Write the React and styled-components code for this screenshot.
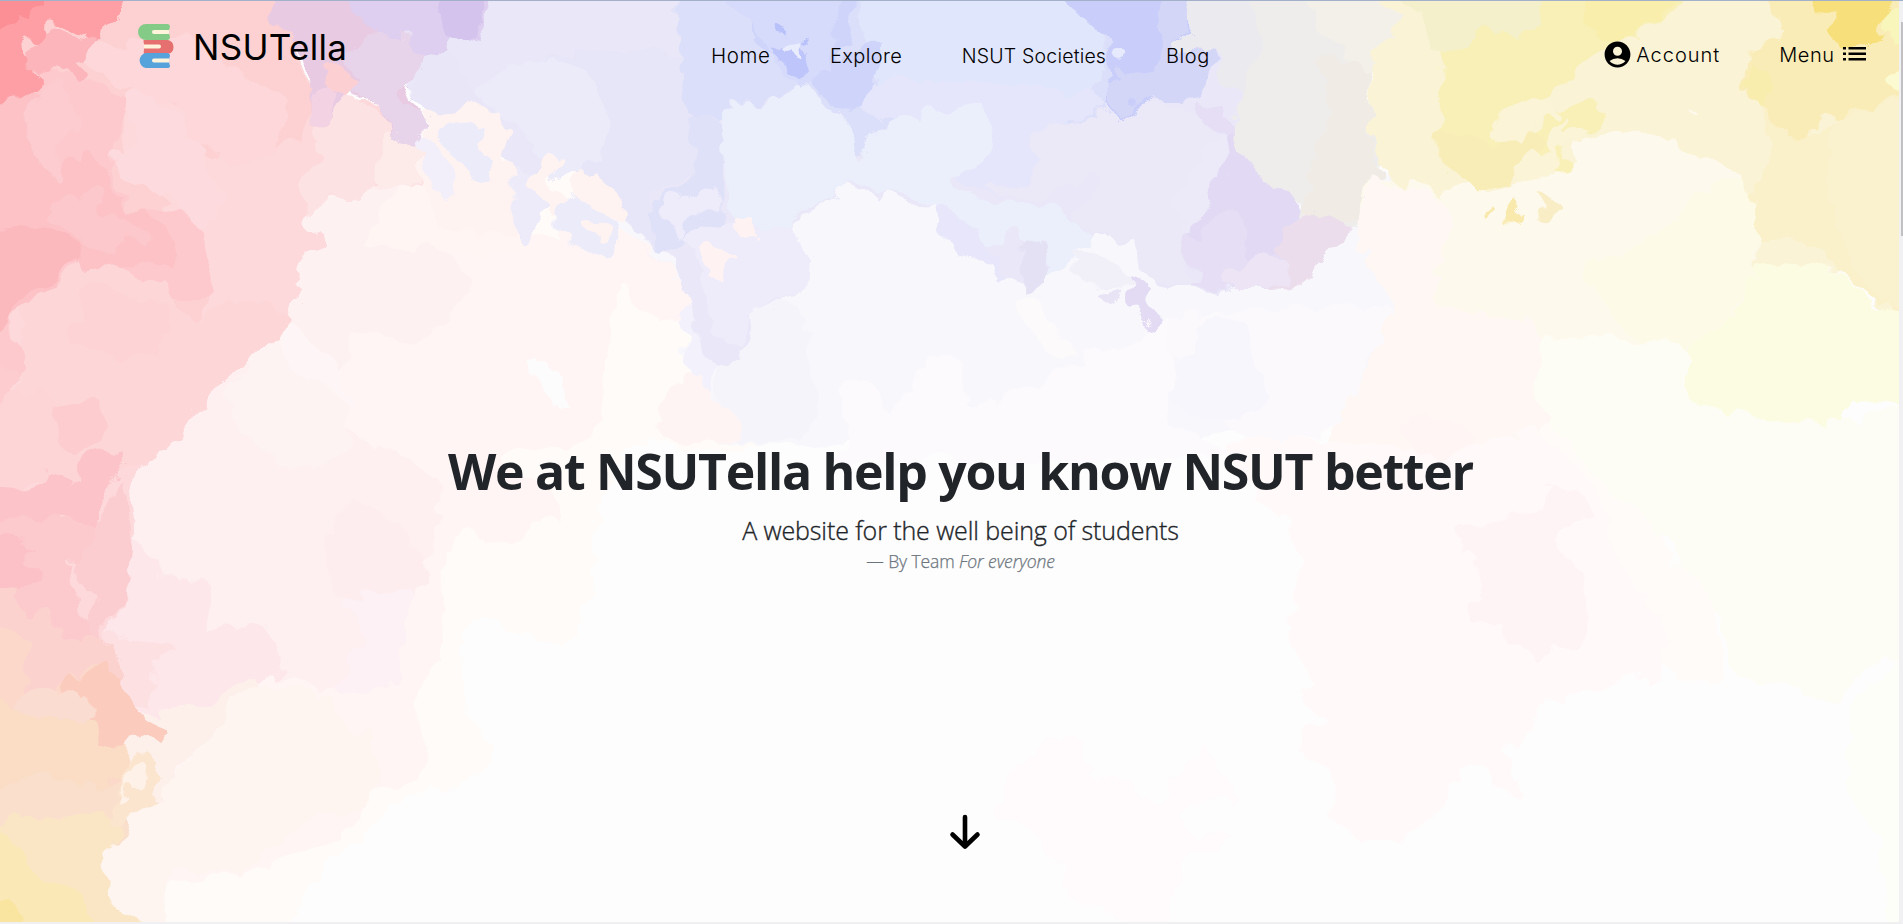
import React from "react";
import styled, { createGlobalStyle } from "styled-components";
import { MdAccountCircle } from "react-icons/md";

const GlobalStyle = createGlobalStyle`
  *, *::before, *::after { box-sizing: border-box; }
  html, body { margin: 0; height: 100%; overflow: hidden; }
`;

const Page = styled.div`
  position: relative;
  isolation: isolate;
  width: 1903px;
  height: 924px;
  overflow: hidden;
  display: flex;
  flex-direction: column;
  border-top: 1px solid #a3b0ca;
  border-bottom: 2px solid #f0eff1;
  font-family: "Open Sans", "Noto Sans", sans-serif;
  color: #212529;
`;

const Wash = styled.svg`
  position: absolute;
  left: 0;
  top: -1px;
  z-index: -1;
`;

const ScrollTrack = styled.div`
  position: absolute;
  right: 0;
  top: 0;
  width: 4px;
  height: 100%;
  padding-top: 21px;
  background: #f1f1f3;
`;

const ScrollThumb = styled.div`
  width: 2px;
  height: 214px;
  margin-left: 2px;
  background: #c1c1c4;
`;

const Header = styled.header`
  display: grid;
  grid-template-columns: 711px 1fr auto;
  align-items: start;
  height: 110px;
  padding-right: 36px;
  font-family: Inter, "Liberation Sans", sans-serif;
  color: #000;
`;

const Brand = styled.a`
  display: flex;
  align-items: flex-start;
  padding: 22px 0 0 137px;
`;

const BrandName = styled.span`
  margin: 1px 0 0 16px;
  font-size: 35px;
  line-height: 46px;
  letter-spacing: ${(p) => p.$track}px;
  white-space: nowrap;
`;

const Nav = styled.nav`
  display: flex;
  gap: 60px;
  padding-top: 40px;
`;

const NavLink = styled.a`
  margin-right: ${(p) => -(p.$track || 0)}px;
  font-size: ${(p) => p.$size || 19.5}px;
  font-weight: 300;
  line-height: 30px;
  letter-spacing: ${(p) => p.$track || 0}px;
  white-space: nowrap;
`;

const Actions = styled.div`
  display: flex;
  gap: 60px;
  padding-top: 38px;
`;

const Action = styled.a`
  display: flex;
  align-items: center;
  height: 30px;
  gap: ${(p) => p.$gap}px;

  ${NavLink} {
    padding-top: 2px;
  }
`;

const Hero = styled.main`
  width: 1921px;
  flex: 1;
  display: flex;
  flex-direction: column;
  align-items: center;
  padding-top: 325px;
`;

const Title = styled.h1`
  margin: 0;
  font-size: 50px;
  line-height: 70px;
  font-weight: 700;
  letter-spacing: ${(p) => p.$track}px;
  white-space: nowrap;
`;

const Subtitle = styled.p`
  margin: 5px 0 0;
  font-size: 25px;
  line-height: 38px;
  font-weight: 300;
  -webkit-text-stroke: 0.35px currentColor;
  letter-spacing: ${(p) => p.$track}px;
  white-space: nowrap;
`;

const Byline = styled.footer`
  margin-top: -1px;
  font-size: 17.5px;
  font-weight: 300;
  -webkit-text-stroke: 0.25px currentColor;
  line-height: 26px;
  color: #6c757d;
  letter-spacing: ${(p) => p.$track}px;
  white-space: nowrap;
`;

const DownLink = styled.a`
  margin: 240px 0 0 9px;
  height: 40px;
`;

/* Closed Catmull-Rom curve through a flat "x,y x,y" list. */
function curve(pts) {
  const p = pts.trim().split(/\s+/).map((s) => s.split(",").map(Number));
  const n = p.length;
  let d = `M${p[0][0]},${p[0][1]}`;
  for (let i = 0; i < n; i++) {
    const a = p[(i - 1 + n) % n];
    const b = p[i];
    const c = p[(i + 1) % n];
    const e = p[(i + 2) % n];
    const k = 7;
    d += `C${(b[0] + (c[0] - a[0]) / k).toFixed(1)},${(b[1] + (c[1] - a[1]) / k).toFixed(1)} ${(c[0] - (e[0] - b[0]) / k).toFixed(1)},${(c[1] - (e[1] - b[1]) / k).toFixed(1)} ${c[0]},${c[1]}`;
  }
  return d + "Z";
}

const washes = [
  // warm cream and rose haze below the left side
  ["#fefbf9", "270,170 700,170 760,440 640,445 600,520 580,640 480,625 465,700 495,770 400,800 370,830 320,875 250,940 -40,940 -40,300"],
  ["#fff5f4", "270,170 400,170 520,235 570,230 620,225 650,240 690,290 695,310 660,318 620,290 610,330 590,440 500,455 560,505 520,540 450,545 440,650 420,700 425,770 370,800 320,850 130,880 90,720 110,440"],
  ["#feeff0", "120,430 250,330 300,260 330,275 280,330 330,370 350,430 440,480 435,530 420,590 400,640 380,680 330,690 270,680 240,700 190,712 145,720 100,640 110,540"],
  ["#fef1f1", "300,200 395,180 370,250 440,250 470,290 420,340 360,335 335,390 270,350 285,290"],
  ["#fff5f3", "400,185 430,178 520,235 500,258 450,250 370,250 380,215"],
  ["#fef3f3", "260,330 330,370 350,440 300,470 250,440 230,400 250,370"],
  ["#fef6f6", "280,325 310,335 345,380 350,410 320,380 290,372 283,350"],
  ["#feedee", "325,560 350,500 395,520 430,580 400,600 340,600"],
  ["#fde7ea", "135,540 170,575 205,582 215,600 207,630 260,630 285,670 245,690 215,705 180,712 145,718 105,655 110,620"],
  ["#fde0e2", "108,635 150,640 175,650 155,670 155,700 140,712 120,690 100,660"],
  ["#fdf1f5", "375,595 420,590 405,640 395,683 340,690 365,640 340,605"],
  ["#fdf0eb", "145,718 185,712 220,700 245,680 260,700 240,730 200,745 175,765 170,790 150,830 120,840 100,820 110,750"],
  ["#fef5f0", "260,690 330,700 350,730 380,740 370,800 300,830 240,870 170,880 160,940 100,930 90,840 150,810 175,770 210,735"],
  ["#fdfcfd", "525,360 555,370 567,400 562,410 545,395 532,375"],

  // pink bank down the left edge
  ["#fdd9db", "-40,-40 290,-40 300,50 325,120 350,105 385,105 420,145 425,182 355,186 350,198 330,193 310,217 325,241 308,255 298,286 306,292 284,326 258,357 225,385 207,407 175,440 145,462 130,500 139,550 129,575 128,600 119,622 105,645 108,668 130,700 146,722 150,740 40,760 -40,740"],
  ["#fde2e4", "322,95 365,103 395,120 420,145 425,182 380,184 350,198 330,192 312,216 305,180 322,155"],
  ["#fdebea", "392,130 425,148 425,180 380,184 380,155"],
  ["#fdd0d2", "-40,-40 285,-40 300,60 310,100 300,140 280,145 240,165 230,146 205,155 180,110 140,95 120,140 165,200 185,260 210,300 180,330 150,340 120,270 80,265 30,300 -40,320"],
  ["#fdd6d8", "30,290 80,262 165,270 190,320 240,300 290,320 255,360 205,407 175,440 145,462 40,470 20,380"],
  ["#fdc9cc", "-40,80 60,70 115,100 140,100 120,120 115,170 135,210 190,210 205,240 215,290 180,300 165,280 145,280 125,270 80,262 55,293 15,305 10,330 25,370 -40,400"],
  ["#fcc2c5", "-40,100 25,90 55,115 60,150 50,180 90,150 110,175 125,205 170,225 180,270 150,262 90,271 70,262 55,292 10,312 -40,320"],
  ["#fcb9bd", "-40,240 40,230 75,240 78,258 66,270 55,288 15,302 2,330 -40,340"],
  ["#fcc8cb", "50,215 75,195 100,190 105,215 130,215 150,235 145,250 125,235 110,255 75,235"],
  ["#fcccd0", "25,110 40,95 55,75 70,90 80,125 70,135 62,180 40,165 28,140"],
  ["#fddadd", "125,100 155,93 175,115 200,140 205,175 225,190 225,200 200,230 170,195 140,190 115,160 115,150 135,145"],
  ["#fdd3d5", "85,290 115,293 140,300 175,310 160,350 120,360 80,345 65,330 85,315"],
  ["#fdd7d9", "80,45 115,50 150,35 210,45 255,85 285,100 275,150 235,165 190,130 175,105 115,90 95,65"],
  ["#fd9fa4", "-40,-40 115,-40 116,15 105,28 98,47 75,30 55,25 45,42 20,40 22,62 42,78 38,90 10,98 -40,110"],
  ["#fc8f96", "-40,-40 40,-40 38,18 25,12 12,25 -40,20"],
  ["#fcb6bb", "45,38 60,28 82,38 98,47 92,58 80,62 90,75 75,78 60,65 30,72 22,55"],
  ["#fcb0b4", "-40,360 0,400 -5,420 -40,430"],
  ["#fdcccf", "-40,370 15,370 22,410 100,400 105,440 70,460 30,430 -40,440"],
  ["#fdd5d7", "20,395 55,400 58,440 95,470 80,500 30,480 0,520 -40,500 -40,420"],
  ["#fcc4c9", "-40,490 25,488 55,475 70,485 60,505 82,470 100,455 122,455 105,500 102,530 70,520 50,530 -40,530"],
  ["#fcc9cc", "-40,525 100,525 90,555 72,570 80,605 95,620 104,635 75,640 30,625 -40,590"],
  ["#fcc1c6", "-40,540 25,545 30,560 45,577 30,590 -40,600"],
  ["#fccdd0", "100,530 122,480 128,520 139,550 129,575 127,600 115,620 100,640 93,600 75,575 80,555"],
  ["#fcd2cf", "-40,580 10,590 30,615 50,605 65,635 105,640 115,680 -40,720"],
  ["#fbd8ca", "-40,635 30,640 30,675 25,700 60,690 90,665 115,690 140,720 146,728 165,732 155,740 130,745 125,770 118,790 85,790 -40,800"],
  ["#fbccbe", "72,680 108,668 130,700 146,722 150,727 167,733 153,742 125,747 85,745 88,725 90,705 70,692"],
  ["#fbdcd0", "15,710 35,690 85,695 92,720 60,726 40,718"],
  ["#fbdcc4", "-40,700 20,712 90,725 100,745 130,748 118,782 60,795 -40,800"],
  ["#fae0cc", "-40,780 20,790 50,775 80,790 125,790 120,840 -40,850"],
  ["#fae6c5", "-40,840 25,820 95,818 122,822 120,835 102,850 98,868 110,885 112,905 142,925 145,940 -40,940"],
  ["#fae8b6", "-40,815 15,840 40,880 80,895 90,940 -40,940"],
  ["#f9e4a0", "-40,895 10,905 22,940 -40,940"],
  ["#fce5cf", "130,763 150,760 158,775 150,795 158,802 138,820 118,822 118,785"],
  ["#fef1e8", "132,770 143,770 145,785 125,788 120,795 132,800 125,805 118,797 122,780"],

  // pale lilac centre
  ["#f8f7fc", "650,190 1420,180 1450,500 1330,420 1190,435 1040,430 850,443 700,440 705,390 680,355 695,335 680,318 692,295 655,250"],
  ["#fcfafd", "850,445 840,390 870,380 885,410 900,405 935,355 965,365 970,405 1020,390 1075,375 1090,345 1140,340 1170,320 1180,365 1170,420 1210,455 850,465"],
  ["#fbf9fc", "1170,325 1250,310 1370,310 1395,330 1370,360 1340,420 1270,450 1210,400"],
  ["#f6f6fc", "1205,320 1245,325 1265,395 1255,412 1210,420 1170,395 1190,355"],
  ["#fdfafb", "1020,300 1045,303 1070,335 1070,365 1045,345 1025,330"],
  ["#f3f1fc", "625,225 690,290 705,320 760,270 755,350 715,372 708,393 682,358 695,335 675,318 692,295 655,255"],
  ["#f6f4fb", "755,310 790,300 810,340 815,420 790,438 740,440 715,400 720,365 745,345"],
  ["#fef4f3", "690,375 715,400 740,420 740,440 665,440 660,405"],

  // lavender canopy
  ["#e9e7f8", "410,-40 1260,-40 1240,110 1240,150 1300,200 1345,220 1352,232 1320,258 1295,284 1240,288 1215,293 1190,292 1160,290 1145,260 1110,240 1070,265 1042,275 1032,290 1005,282 972,262 945,235 938,210 912,206 895,195 875,196 850,186 820,205 792,230 803,255 800,267 813,270 800,290 775,303 752,313 752,340 730,362 712,365 695,320 665,250 640,222 622,214 600,190 575,180 560,165 545,195 548,215 535,240 518,238 515,210 520,180 500,155 470,110 435,115"],
  ["#e7e5f8", "540,60 690,60 700,150 690,180 650,195 662,250 625,218 600,190 575,180 550,150 530,100"],
  ["#dfe1f8", "690,120 720,125 722,210 730,235 700,240 662,250 650,215 670,190 695,180"],
  ["#ecebfa", "480,90 545,60 600,90 610,140 570,180 545,160 520,130"],
  ["#eeebfa", "660,220 670,195 695,195 715,190 720,210 700,215 680,240 705,225 740,225 780,220 812,270 800,290 755,312 740,350 710,320 705,290 690,250"],
  ["#dcdff9", "690,-40 830,-40 1000,-40 1120,-40 1115,60 1110,115 1060,140 1000,110 940,115 880,145 855,155 835,120 800,90 770,105 700,115 680,60"],
  ["#e0e6fb", "860,-40 1060,-40 1100,30 1105,70 1090,100 1050,140 1020,190 990,180 980,130 930,110 880,90 870,40"],
  ["#e5e6fb", "840,90 950,80 1060,90 1110,110 1050,130 1030,190 980,190 900,130"],
  ["#ebeefb", "720,115 740,105 775,105 795,82 815,90 835,110 855,130 862,160 875,140 895,122 925,115 975,110 995,145 980,165 950,180 990,200 1030,205 1070,215 1090,240 1070,265 1040,275 1020,235 990,255 1003,280 972,262 945,240 938,210 895,195 850,186 800,215 790,230 735,218 725,185 722,140"],
  ["#e7e6fa", "940,212 965,220 985,245 1003,280 972,262 950,245"],
  ["#e5e1f5", "1025,245 1048,240 1050,270 1032,290 1020,280"],
  ["#ebe8f8", "1040,135 1110,115 1170,105 1215,125 1230,150 1225,185 1190,220 1185,250 1195,290 1160,285 1140,265 1110,240 1090,235 1080,210 1100,180 1070,185 1035,200 990,190 1035,180"],
  ["#ced4fa", "770,-40 845,-40 855,25 840,60 880,40 860,110 830,100 800,70 770,55 750,30"],
  ["#d6dbfb", "700,-40 830,-40 830,60 815,85 780,70 750,25"],
  ["#bdc5fa", "768,47 795,48 805,62 806,78 785,68"],
  ["#b9c1fa", "780,24 790,28 790,34 780,32"],
  ["#b9c1fa", "803,39 808,41 805,47 800,45"],
  ["#e9ecfc", "785,48 800,43 797,63"],
  ["#c8cdf9", "1020,-40 1210,-40 1195,20 1180,50 1200,60 1190,90 1160,100 1118,118 1112,80 1108,60 1111,38 1097,30 1080,15"],
  ["#d4d6f8", "1160,-40 1210,-40 1195,15 1178,45 1200,38 1216,48 1212,68 1192,98 1150,102 1120,115 1115,75 1160,65"],
  ["#e7e9fc", "1116,51 1124,57 1120,66 1115,59"],
  ["#e6def4", "1195,100 1235,125 1240,150 1300,200 1345,220 1352,232 1320,258 1295,284 1240,288 1190,290 1200,275 1180,240 1205,215 1225,180 1230,140 1200,120"],
  ["#e2daf4", "1235,135 1310,205 1310,218 1275,255 1250,260 1235,210 1195,240 1190,215 1215,190"],
  ["#ecdded", "1275,245 1305,223 1325,218 1350,235 1320,258 1305,282 1275,287 1285,265"],
  ["#ede5f5", "1230,275 1265,257 1285,263 1285,283 1235,288"],
  ["#ece9f9", "1205,145 1228,138 1225,180 1190,230 1175,200 1195,175"],
  ["#f8f7fc", "1070,265 1090,242 1100,239 1125,248 1138,243 1148,258 1150,275 1135,283 1160,295 1160,320 1130,345 1065,345 1040,300 1045,277"],
  ["#f1eff8", "1075,258 1095,255 1133,277 1130,285 1095,285 1078,275"],
  ["#e2dbf3", "1135,278 1150,287 1153,300 1160,322 1152,332 1146,310 1133,305"],
  ["#e8e3f5", "1103,294 1126,288 1115,301 1105,302"],

  // violet fringe
  ["#e8cbe3", "270,-40 380,-40 400,30 405,80 425,110 420,147 395,130 380,103 355,97 340,75 345,95 325,125 307,110 308,65 285,30"],
  ["#e8d4ea", "355,50 380,30 420,50 418,75 400,90 425,115 420,147 400,135 380,103 350,92 355,75 345,60"],
  ["#decff0", "330,-40 485,-40 484,20 470,42 455,42 440,60 420,55 405,38 370,30 350,0"],
  ["#d4c4ed", "435,-40 482,-40 483,10 470,40 455,42 440,15"],
  ["#fccfd2", "325,70 340,65 355,82 345,98 328,88"],
  ["#f3d3e3", "315,95 332,90 335,110 323,126 308,113"],
  ["#e9e6f7", "418,65 430,57 455,65 475,90 490,110 460,115 435,112 422,95"],
  // cream flecks between lavender and rose
  ["#fff3f1", "428,115 448,112 470,108 500,113 505,130 512,140 500,158 515,170 520,195 510,235 440,225 425,182 416,165 425,150"],
  ["#ecebfa", "440,128 460,120 485,130 475,145 490,160 500,177 485,180 465,162 448,150"],
  ["#f2effa", "420,140 435,140 445,160 457,175 455,195 443,196 430,180"],
  ["#edebfa", "515,165 530,175 540,165 548,195 545,225 535,240 520,240 514,215"],
  ["#fff3f1", "540,160 550,155 565,162 552,180 565,200 568,215 555,220 540,200 528,190"],
  ["#ecebfa", "558,205 580,200 610,215 620,228 617,255 600,252 575,250 565,235"],
  ["#fff3f1", "575,178 592,175 600,188 620,205 625,220 605,213 578,203"],
  ["#fff3f1", "581,222 610,223 610,244 597,240 598,232 585,235"],
  ["#fef3f2", "733,218 745,219 758,216 755,235 748,245 738,237"],
  ["#fef3f2", "705,250 716,252 722,248 735,258 722,278 702,266"],

  // grey-beige column
  ["#ebeaee", "1190,-40 1280,-40 1265,80 1245,95 1225,82 1216,50 1195,50 1178,45 1195,20"],
  ["#eeedeb", "1255,-40 1345,-40 1370,60 1375,120 1385,160 1370,185 1360,210 1352,235 1330,220 1312,218 1310,202 1270,180 1240,152 1235,120 1242,90 1260,60"],
  ["#f0ece5", "1325,60 1375,70 1372,110 1375,150 1385,175 1365,190 1352,230 1315,215 1315,150 1330,110"],
  ["#f3f0ea", "1315,-40 1420,-40 1420,35 1380,75 1360,65 1320,30"],

  // yellow bank
  ["#fdf9ec", "1372,180 1500,180 1640,110 1800,180 1830,270 1780,400 1700,440 1570,450 1545,345 1500,430 1440,445 1395,300 1360,235"],
  ["#fef7f4", "1372,178 1400,190 1450,210 1440,300 1540,330 1560,450 1440,450 1380,480 1320,460 1380,350 1390,290 1355,235"],
  ["#faf3d6", "1380,-40 1940,-40 1940,330 1899,322 1878,305 1860,285 1830,268 1790,265 1764,275 1760,245 1742,210 1745,185 1715,160 1690,155 1680,138 1650,137 1630,130 1590,138 1575,165 1560,172 1530,182 1495,193 1485,182 1440,195 1415,185 1400,190 1385,165 1378,145 1372,115 1378,80 1375,55 1400,20"],
  ["#f8f0b7", "1410,-40 1640,-40 1680,0 1640,30 1600,60 1560,85 1545,100 1510,120 1500,138 1530,135 1560,110 1600,105 1600,125 1580,140 1560,155 1575,165 1560,172 1520,150 1515,185 1480,185 1450,170 1435,145 1445,110 1440,60 1425,25"],
  ["#f4f0cc", "1375,-40 1530,-40 1540,25 1500,35 1475,30 1465,50 1440,55 1420,20"],
  ["#f9eeab", "1585,-40 1690,-40 1670,5 1640,28 1615,45 1590,25"],
  ["#f9edb7", "1440,130 1475,140 1500,145 1530,130 1550,145 1520,155 1515,185 1475,188 1450,172 1435,150"],
  ["#fbf4d7", "1500,138 1500,120 1535,102 1560,115 1530,125 1520,142"],
  ["#fbf4d7", "1558,128 1570,120 1565,135 1590,128 1582,145 1555,152 1560,168 1545,182 1525,180 1515,165 1530,148 1548,152"],
  ["#f9e9ac", "1510,198 1518,205 1515,212 1522,214 1512,225 1506,222"],
  ["#f9e9ac", "1486,210 1491,209 1490,214 1486,214"],
  ["#f9edc5", "1545,197 1560,205 1565,212 1545,222 1538,220 1550,210"],
  ["#faecb6", "1750,-40 1940,-40 1940,110 1880,110 1850,120 1820,115 1810,135 1780,140 1765,110 1745,85 1755,50 1785,35 1780,15"],
  ["#f7e07b", "1808,-40 1896,-40 1895,15 1886,30 1870,42 1845,48 1830,35 1833,15 1815,8"],
  ["#f9edad", "1755,65 1770,75 1770,105 1765,110 1748,85"],
  ["#faf0c9", "1765,110 1790,140 1830,125 1860,110 1940,120 1940,322 1880,302 1850,280 1800,240 1760,240 1740,210 1770,170"],
  ["#faf1cf", "1840,120 1940,125 1940,320 1870,290 1850,250 1830,200"],
  ["#f8f6ba", "1898,15 1920,20 1920,50 1897,52 1889,36"],
  ["#fbfad0", "1887,80 1920,80 1920,100 1897,97"],
  ["#fff9ef", "1690,113 1695,119 1693,122"],
  ["#fdfbe8", "1630,250 1740,180 1760,260 1755,290 1690,350 1640,345 1590,275"],
  ["#fcfce3", "1755,275 1790,262 1830,268 1860,290 1880,308 1940,330 1940,405 1860,400 1840,440 1810,430 1750,420 1700,410 1690,375 1700,340 1740,310"],
  ["#fefdf5", "1547,340 1630,345 1690,350 1695,405 1760,415 1850,425 1940,410 1940,655 1880,660 1840,700 1810,700 1790,685 1740,680 1725,640 1710,610 1680,590 1670,540 1600,515 1560,445 1540,400"],
  ["#fffbf9", "1550,430 1600,480 1640,510 1680,570 1710,610 1720,680 1660,670 1600,600 1550,520"],

  // faint blush in the lower right
  ["#fff9f9", "1230,440 1440,450 1530,435 1590,480 1620,560 1660,620 1665,660 1652,690 1640,675 1595,695 1575,705 1570,710 1540,705 1530,730 1515,745 1500,745 1525,780 1520,795 1500,790 1480,765 1455,790 1425,825 1385,845 1350,835 1335,820 1335,790 1320,765 1300,758 1305,735 1325,720 1305,705 1310,680 1295,650 1295,600 1300,540 1270,505"],
  ["#fff4f5", "1460,535 1510,515 1545,505 1550,488 1575,490 1590,515 1560,545 1575,570 1585,595 1580,645 1555,645 1540,660 1515,645 1500,625 1468,615 1480,590 1475,560"],
  ["#fff5f5", "1400,425 1440,420 1475,440 1450,460 1420,450"],
  ["#fffafb", "1068,735 1085,765 1100,785 1120,775 1155,805 1185,770 1205,745 1220,760 1235,800 1200,800 1180,815 1190,835 1225,835 1215,855 1190,860 1180,890 1165,940 1130,922 1070,895 1065,870 1030,830 1000,810 1015,770"],
  ["#fefef9", "1860,700 1910,660 1940,720 1940,940 1890,940 1885,850 1850,780"],
];

function Watercolor() {
  return (
    <Wash width="1903" height="924" viewBox="0 0 1903 924" aria-hidden="true">
      <defs>
        <filter id="torn" filterUnits="userSpaceOnUse" x="-40" y="-40" width="1980" height="1000" colorInterpolationFilters="sRGB">
          <feTurbulence type="turbulence" baseFrequency="0.025" numOctaves="2" seed="8" />
          <feColorMatrix values="1 0 0 0 0.3  0 1 0 0 0.3  0 0 1 0 0.3  0 0 0 0 1" />
          <feDisplacementMap in="SourceGraphic" scale="24" xChannelSelector="R" yChannelSelector="G" />
        </filter>
      </defs>
      <rect width="1903" height="924" fill="#fefdfd" />
      <g filter="url(#torn)">
        <rect x="-40" y="-40" width="1980" height="1000" fill="#fefdfd" />
        {washes.map(([fill, pts], i) => (
          <path key={i} d={curve(pts)} fill={fill} />
        ))}
      </g>
    </Wash>
  );
}

function BooksLogo() {
  return (
    <svg width="40" height="46" viewBox="0 0 40 46">
      <path d="M9 1H30Q33 1 33 4Q31 8 33 14Q33 17 30 17H9A8 8 0 0 1 9 1Z" fill="#85cb88" />
      <path d="M7 17H31A7.2 7.2 0 0 1 31 31H8Q6 31 7 27V21Q6 17 7 17Z" fill="#e6706f" />
      <path d="M9 30H30Q33 30 33 33Q31 37 33 43Q33 45 30 45H9A7.6 7.6 0 0 1 9 30Z" fill="#56a3dc" />
      <path d="M17 7H32V11H17A2 2 0 0 1 17 7ZM7 21.500H22A2 2 0 0 1 22 25.500H7ZM17 35.500H32V39.500H17A2 2 0 0 1 17 35.500Z" fill="#fff3dc" />
    </svg>
  );
}

function ListIcon() {
  return (
    <svg width="24" height="16" viewBox="0 0 24 16" fill="#000">
      <path d="M0 1h3v2.500H0zM0 6.500h3V9H0zM0 12h3v2.500H0zM5.500 1H23v2.500H5.500zM5.500 6.500H23V9H5.500zM5.500 12H23v2.500H5.500z" />
    </svg>
  );
}

export default function App() {
  return (
    <>
      <GlobalStyle />
      <Page>
        <Watercolor />
        <Header>
          <Brand>
            <BooksLogo />
            <BrandName $track={0.3}>NSUTella</BrandName>
          </Brand>
          <Nav>
            <NavLink $size={20.5} $track={0.6}>Home</NavLink>
            <NavLink $size={20} $track={0.4}>Explore</NavLink>
            <NavLink $track={0.18}>NSUT Societies</NavLink>
            <NavLink $size={20} $track={0.6}>Blog</NavLink>
          </Nav>
          <Actions>
            <Action $gap={3}>
              <MdAccountCircle size={31} />
              <NavLink $size={20} $track={1}>Account</NavLink>
            </Action>
            <Action $gap={9}>
              <NavLink $size={20} $track={0.5}>Menu</NavLink>
              <ListIcon />
            </Action>
          </Actions>
        </Header>
        <Hero>
          <Title $track={-1.3}>We at NSUTella help you know NSUT better</Title>
          <Subtitle $track={-0.1}>A website for the well being of students</Subtitle>
          <Byline $track={-0.1}>
            — By Team <em>For everyone</em>
          </Byline>
          <DownLink>
            <svg width="32" height="36" viewBox="0 0 32 36" fill="none" stroke="#000" strokeWidth="4.600" strokeLinecap="round" strokeLinejoin="round">
              <path d="M16 3V32M3.500 20.500L16 32.500L28.500 20.500" />
            </svg>
          </DownLink>
        </Hero>
        <ScrollTrack>
          <ScrollThumb />
        </ScrollTrack>
      </Page>
    </>
  );
}
